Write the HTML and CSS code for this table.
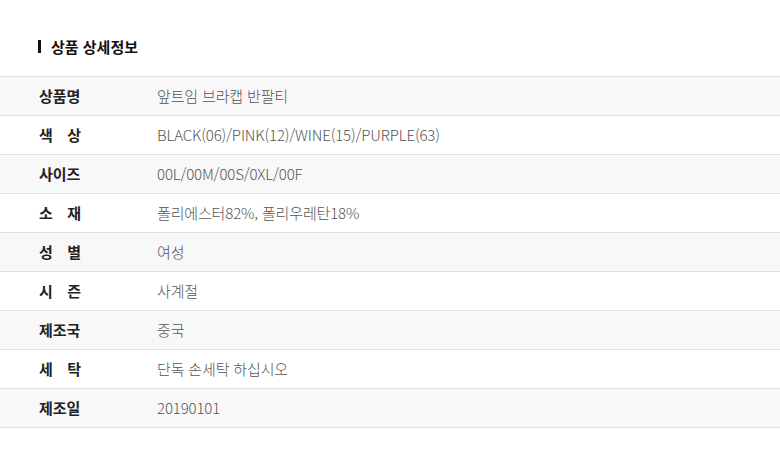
FILE: index.html
```html
<!DOCTYPE html>
<html lang="ko">
<head>
<meta charset="utf-8">
<link rel="stylesheet" href="styles.css">
</head>
<body>
<div class="page">
  <h2 class="title"><span class="bar"></span>상품 상세정보</h2>
  <div class="table">
    <div class="row alt"><div class="label"><span class="lbl">상품명</span></div><div class="value">앞트임 브라캡 반팔티</div></div>
    <div class="row"><div class="label"><span class="lbl spread"><span>색</span><span>상</span></span></div><div class="value">BLACK(06)/PINK(12)/WINE(15)/PURPLE(63)</div></div>
    <div class="row alt"><div class="label"><span class="lbl">사이즈</span></div><div class="value">00L/00M/00S/0XL/00F</div></div>
    <div class="row"><div class="label"><span class="lbl spread"><span>소</span><span>재</span></span></div><div class="value">폴리에스터82%, 폴리우레탄18%</div></div>
    <div class="row alt"><div class="label"><span class="lbl spread"><span>성</span><span>별</span></span></div><div class="value">여성</div></div>
    <div class="row"><div class="label"><span class="lbl spread"><span>시</span><span>즌</span></span></div><div class="value">사계절</div></div>
    <div class="row alt"><div class="label"><span class="lbl">제조국</span></div><div class="value">중국</div></div>
    <div class="row"><div class="label"><span class="lbl spread"><span>세</span><span>탁</span></span></div><div class="value">단독 손세탁 하십시오</div></div>
    <div class="row alt"><div class="label"><span class="lbl">제조일</span></div><div class="value">20190101</div></div>
  </div>
</div>
</body>
</html>
```
FILE: styles.css
```css
* { box-sizing: border-box; margin: 0; padding: 0; }
body {
  background: #fff;
  font-family: "Noto Sans CJK KR", "Noto Sans", sans-serif;
  color: #222;
}
.page { padding-top: 35px; }
.title {
  display: flex;
  align-items: center;
  gap: 10px;
  padding-left: 38px;
  font-size: 15px;
  font-weight: 700;
  color: #111;
  height: 22px;
  margin-bottom: 19px;
}
.bar {
  display: block;
  width: 3px;
  height: 13px;
  background: #111;
}
.table { border-top: 1px solid #e2e2e2; }
.row {
  display: flex;
  align-items: center;
  height: 39px;
  padding-bottom: 1px;
  border-bottom: 1px solid #e2e2e2;
}
.row.alt { background: #f8f8f8; }
.label {
  width: 157px;
  flex-shrink: 0;
  padding-left: 39px;
  font-size: 15px;
  font-weight: 700;
  color: #222;
  white-space: nowrap;
}
.lbl { display: inline-block; }
.lbl.spread {
  display: inline-flex;
  width: 42px;
  justify-content: space-between;
}
.value {
  font-size: 15px;
  font-weight: 300;
  color: #555;
  letter-spacing: -0.15px;
}
```
